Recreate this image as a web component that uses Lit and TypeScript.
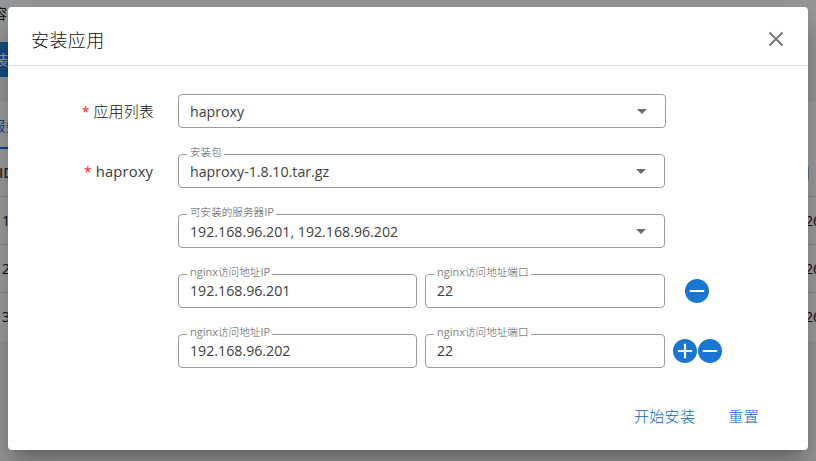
import { LitElement, html, css } from "lit";
import { customElement, property } from "lit/decorators.js";

const minusPath = "M12 2C6.48 2 2 6.48 2 12s4.480 10 10 10 10-4.480 10-10S17.520 2 12 2zm6 10.900H6v-1.700h12z";
const plusPath = "M12 2C6.48 2 2 6.48 2 12s4.480 10 10 10 10-4.480 10-10S17.520 2 12 2zm6 10.900h-5.100V18h-1.800v-5.100H6v-1.800h5.100V6h1.800v5.100H18z";

@customElement("outlined-field")
class OutlinedField extends LitElement {
  @property() latin = "";
  @property() cjk = "";
  @property() suffix = "";
  @property() value = "";
  @property({ type: Boolean }) select = false;

  static styles = css`
    :host { display: block; position: relative; height: 34px; box-sizing: border-box;
      border: 1px solid #9b9b9b; border-radius: 4px; padding: 0 17px 0 11px; }
    .row { height: 32px; display: flex; align-items: center; justify-content: space-between;
      font-size: 14.2px; line-height: 20px; color: #3e3e3e; white-space: pre; }
    :host([select]) .value { padding-top: 1px; }
    .label { position: absolute; left: 8px; top: -11px; height: 15px; padding: 0 2px 0 3px;
      background: #fff; color: #808080; display: flex; align-items: center; white-space: nowrap;
      font-size: 11px; line-height: 15px; }
    .cjk { font-family: "Noto Sans CJK SC", sans-serif; font-weight: 300; font-size: 10.6px; color: #555; }
    .latin { font-size: 11px; }
    .arrow { width: 24px; height: 24px; margin-right: -6px; flex: none; }
  `;

  render() {
    return html`
      ${this.cjk
        ? html`<div class="label"><span class="latin">${this.latin}</span><span class="cjk">${this.cjk}</span><span class="latin">${this.suffix}</span></div>`
        : null}
      <div class="row">
        <span class="value">${this.value}</span>
        ${this.select
          ? html`<svg class="arrow" viewBox="0 0 24 24"><path d="M7 10l5 5 5-5z" fill="#6c6c6c" /></svg>`
          : null}
      </div>`;
  }
}

@customElement("app-root")
class AppRoot extends LitElement {
  static styles = css`
    :host { display: block; position: relative; width: 816px; height: 461px; overflow: hidden;
      font-family: "Open Sans", "Noto Sans CJK SC", sans-serif; font-size: 14.2px; color: #3a3a3a; }
    .page { height: 461px; background: #f0f2f5; white-space: nowrap; overflow: hidden; color: #222; }
    .crumb { height: 42px; line-height: 28px; text-indent: -7px; }
    .primary { width: 80px; height: 35px; background: #1f7ddb; color: #fff; line-height: 36px; text-indent: -6px; font-size: 14px; }
    .gap { height: 24px; }
    .card { background: #fff; height: 240px; }
    .tab { width: 70px; height: 48px; box-sizing: border-box; line-height: 50px; text-indent: -9px;
      color: #1976d2; border-bottom: 2px solid #1976d2; }
    .tr { height: 48px; box-sizing: border-box; border-bottom: 1px solid #ddd; line-height: 48px;
      display: flex; justify-content: space-between; padding-left: 2px; }
    .tr:last-child { border-bottom: 0; }
    .tr.head { font-weight: 600; padding-left: 0; line-height: 48px; text-indent: -1px; color: #444; }
    .end { width: 11px; }
    .head .end { width: 20px; }
    .scrim { position: absolute; inset: 0; background: rgba(0, 0, 0, 0.36); }
    .dialog { position: absolute; left: 8px; top: 7px; width: 800px; height: 443px; background: #fff;
      border-radius: 4px; box-sizing: border-box; display: flex; flex-direction: column;
      box-shadow: 0 11px 15px -7px rgba(0,0,0,.2), 0 24px 38px 3px rgba(0,0,0,.14), 0 9px 46px 8px rgba(0,0,0,.12); }
    .header { height: 59px; box-sizing: border-box; border-bottom: 1px solid #e0e0e0; display: flex;
      align-items: center; justify-content: space-between; padding: 6px 20px 0 23px; flex: none; }
    .title { font-family: "Noto Sans CJK SC", sans-serif; font-weight: 300; font-size: 18px;
      letter-spacing: .4px; line-height: 26px; color: #111; }
    .close { width: 24px; height: 24px; }
    .form { padding: 28px 0 0 24px; display: flex; flex-direction: column; gap: 26px; }
    .line { display: flex; height: 34px; }
    .name { width: 122px; margin-right: 24px; display: flex; align-items: center; justify-content: flex-end; gap: 4px; white-space: nowrap; }
    .star { color: #f22; font-size: 14px; }
    .name .cjk { font-family: "Noto Sans CJK SC", sans-serif; font-weight: 300; font-size: 15px; letter-spacing: .15px; color: #111; padding-bottom: 2px; }
    .name .latin { font-size: 14.8px; letter-spacing: .1px; margin-right: 1px; }
    .full { width: 487px; }
    .first { width: 488px; }
    .ip { width: 239px; margin-right: 8px; }
    .port { width: 240px; }
    .tools { width: 65px; display: flex; align-items: center; justify-content: center; gap: 1px; }
    .tools.single { width: 64px; }
    .tools svg { width: 24px; height: 24px; }
    .actions { margin-top: auto; display: flex; justify-content: flex-end; gap: 33px; padding: 0 49px 22px 0;
      font-family: "Noto Sans CJK SC", sans-serif; font-weight: 300; font-size: 15px; letter-spacing: .35px; line-height: 24px; color: #0068d0; }
  `;

  private circle(plus: boolean) {
    return html`<svg viewBox="2 2 20 20"><path d=${plus ? plusPath : minusPath} fill="#1976d2" /></svg>`;
  }

  render() {
    const hosts = ["192.168.96.201", "192.168.96.202"];
    return html`
      <div class="page">
        <div class="crumb">容器</div>
        <div class="primary">装应用</div>
        <div class="gap"></div>
        <div class="card">
          <div class="tab">服务</div>
          <div class="tr head"><span>ID</span><span class="end">间</span></div>
          ${[1, 2, 3].map((n) => html`<div class="tr"><span>${n}</span><span class="end">26</span></div>`)}
        </div>
      </div>
      <div class="scrim"></div>
      <div class="dialog">
        <div class="header">
          <div class="title">安装应用</div>
          <svg class="close" viewBox="0 0 24 24"><path d="M5.500 5.500l13 13m0-13l-13 13" stroke="#757575" stroke-width="1.900" fill="none" /></svg>
        </div>
        <div class="form">
          <div class="line">
            <div class="name"><span class="star">*</span><span class="cjk">应用列表</span></div>
            <outlined-field class="first" select value="haproxy"></outlined-field>
          </div>
          <div class="line">
            <div class="name"><span class="star">*</span><span class="latin">haproxy</span></div>
            <outlined-field class="full" select cjk="安装包" value="haproxy-1.8.10.tar.gz"></outlined-field>
          </div>
          <div class="line">
            <div class="name"></div>
            <outlined-field class="full" select cjk="可安装的服务器" suffix="IP" value="192.168.96.201, 192.168.96.202"></outlined-field>
          </div>
          ${hosts.map((ip, i) => html`
            <div class="line">
              <div class="name"></div>
              <outlined-field class="ip" latin="nginx" cjk="访问地址" suffix="IP" value=${ip}></outlined-field>
              <outlined-field class="port" latin="nginx" cjk="访问地址端口" value="22"></outlined-field>
              <div class="tools ${i === hosts.length - 1 ? "" : "single"}">${i === hosts.length - 1 ? this.circle(true) : null}${this.circle(false)}</div>
            </div>`)}
        </div>
        <div class="actions"><span>开始安装</span><span>重置</span></div>
      </div>`;
  }
}
